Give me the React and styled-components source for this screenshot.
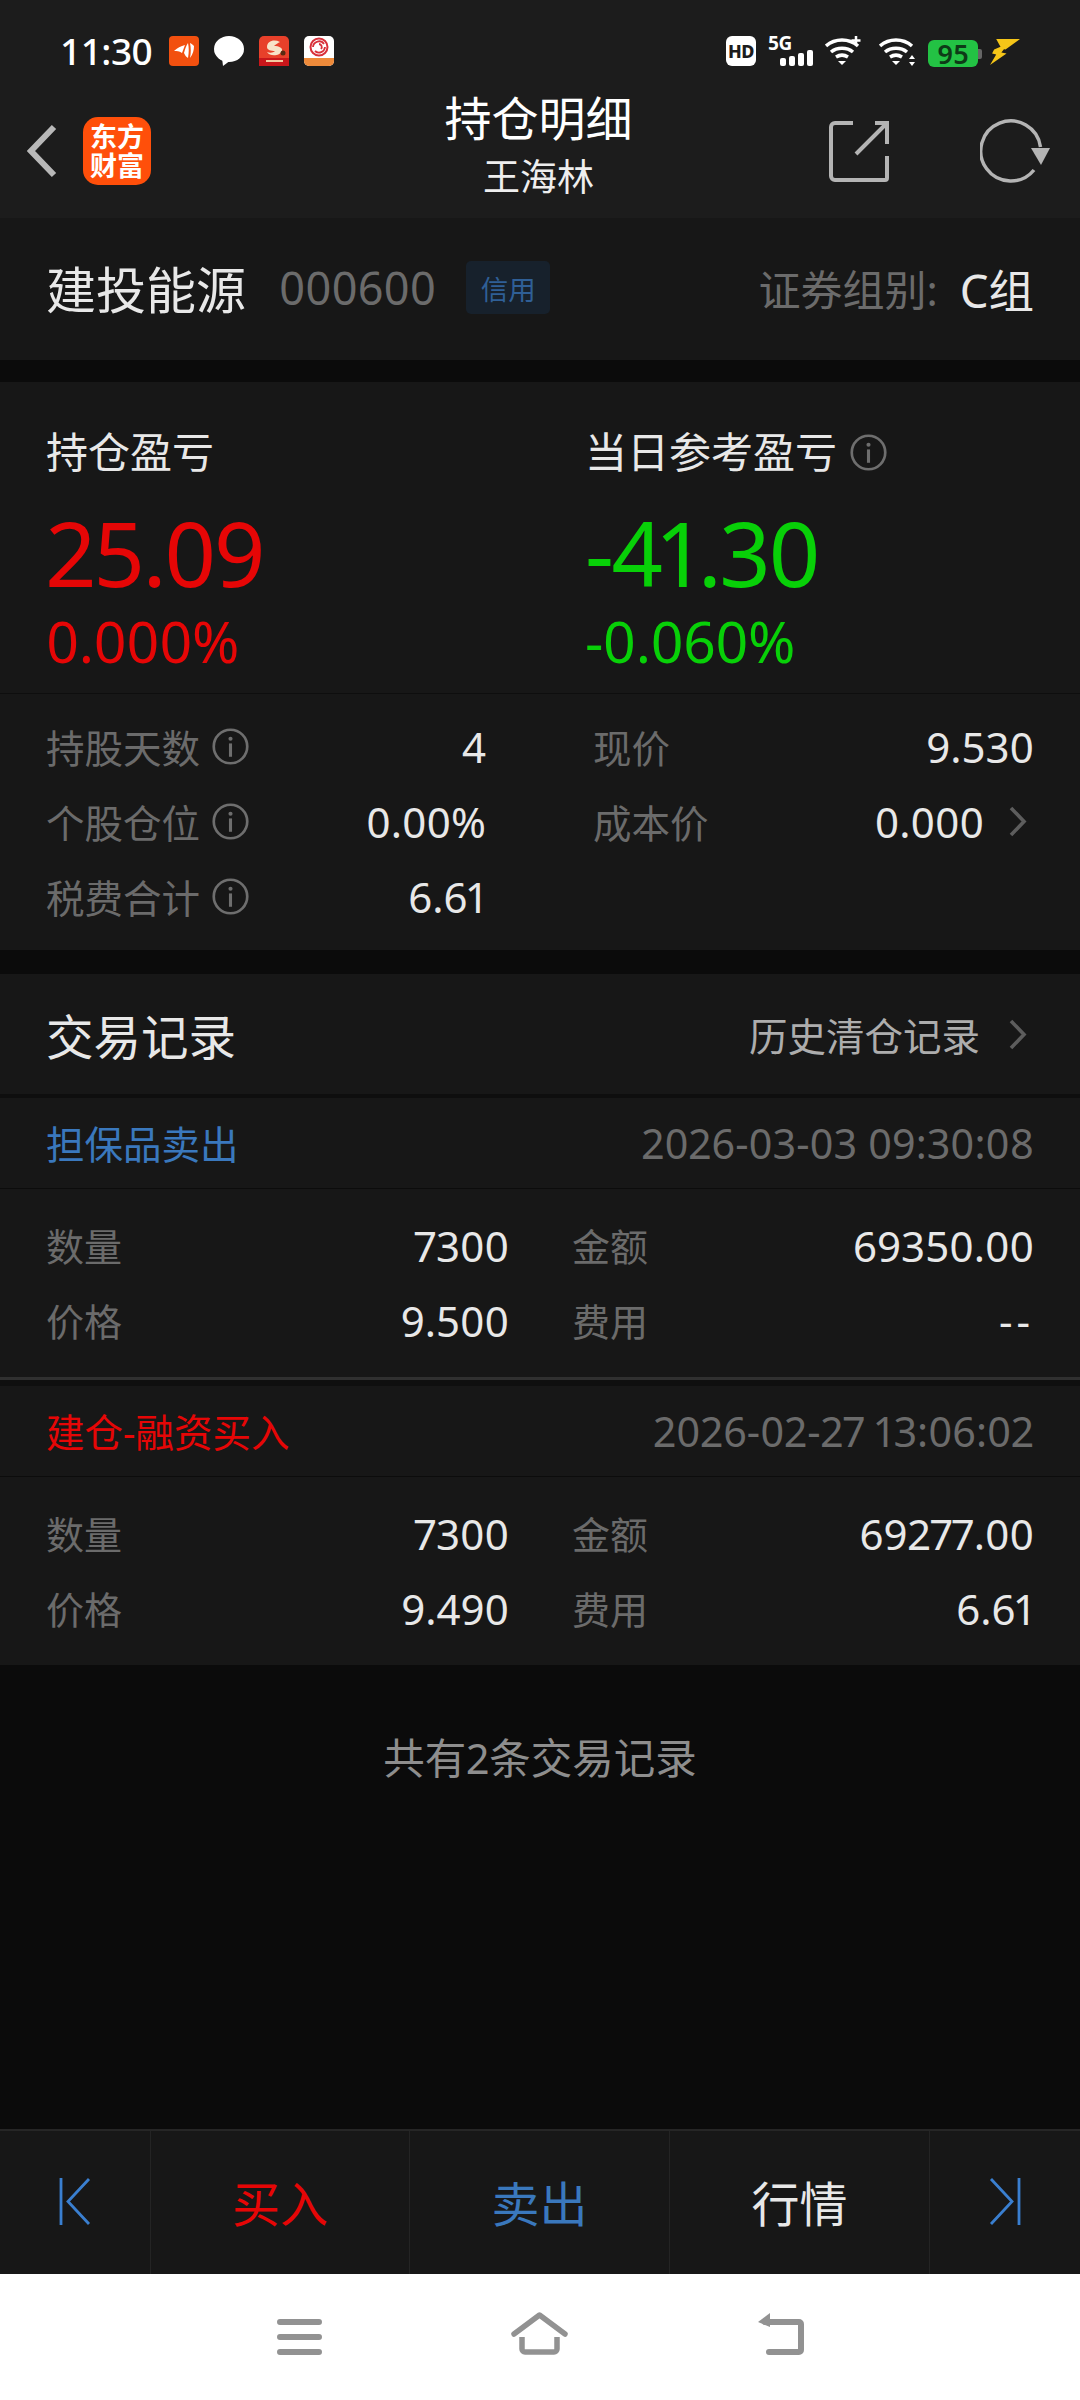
import React from 'react'
import styled, { createGlobalStyle } from 'styled-components'

const colors = {
  nav: '#1c1c1c',
  panel: '#171717',
  gap: '#0b0b0b',
  label: '#6b6b6b',
  value: '#e8e8e8',
  red: '#e60606',
  green: '#08d008',
  blue: '#3a78bd',
}

const GlobalStyle = createGlobalStyle`
  html, body {
    margin: 0;
    padding: 0;
    background: ${colors.gap};
  }
  * {
    box-sizing: border-box;
  }
  body {
    font-family: 'Noto Sans', 'Noto Sans CJK SC', sans-serif;
    font-variant-numeric: proportional-nums;
  }
`

const Page = styled.div`
  width: 1080px;
  height: 2400px;
  display: flex;
  flex-direction: column;
  background: ${colors.gap};
  overflow: hidden;
`

const TopArea = styled.header`
  height: 218px;
  background: ${colors.nav};
  display: flex;
  flex-direction: column;
`

const StatusBar = styled.div`
  height: 102px;
  padding: 36px 60px 0 60px;
  display: flex;
  align-items: flex-start;
  justify-content: space-between;
`

const StatusGroup = styled.div`
  display: flex;
  align-items: center;
  height: 30px;
  gap: ${p => p.$gap || 15}px;
`

const Clock = styled.span`
  font-size: 37px;
  line-height: 30px;
  font-weight: 500;
  font-variant-numeric: tabular-nums;
  color: #fff;
  margin-right: 2px;
  letter-spacing: -0.5px;
`

const NavBar = styled.div`
  flex: 1;
  display: grid;
  grid-template-columns: 1fr auto 1fr;
  align-items: center;
  padding: 0 30px 0 27px;
  margin-top: -18px;
`

const NavLeft = styled.div`
  display: flex;
  align-items: center;
  gap: 26px;
`

const NavRight = styled.div`
  display: flex;
  align-items: center;
  justify-content: flex-end;
  gap: 91px;
`

const AppLogo = styled.div`
  width: 68px;
  height: 68px;
  border-radius: 15px;
  background: #ff4f0a;
  color: #fff;
  font-size: 27px;
  line-height: 29px;
  font-weight: 700;
  text-align: center;
  padding-top: 5px;
`

const TitleBlock = styled.div`
  align-self: start;
  margin-top: 4px;
  text-align: center;
  color: #fff;
`

const Title = styled.div`
  font-size: 47px;
  line-height: 60px;
`

const SubTitle = styled.div`
  font-size: 37px;
  line-height: 50px;
  margin-top: 4px;
  color: #eee;
`

const StockRow = styled.section`
  height: 142px;
  background: ${colors.panel};
  padding: 0 46px 3px;
  display: flex;
  align-items: center;
`

const StockName = styled.span`
  font-size: 50px;
  color: ${colors.value};
  margin-right: 33px;
`

const StockCode = styled.span`
  font-size: 45px;
  color: ${colors.label};
  margin-right: 30px;
`

const CreditTag = styled.span`
  width: 84px;
  height: 53px;
  border-radius: 5px;
  background: #17212c;
  color: #2f5f96;
  font-size: 27.5px;
  display: flex;
  align-items: center;
  justify-content: center;
`

const GroupLabel = styled.span`
  margin-left: auto;
  font-size: 42px;
  color: ${colors.label};
`

const GroupValue = styled.span`
  font-size: 45.5px;
  color: ${colors.value};
  margin-left: 22px;
`

const Panel = styled.section`
  margin-top: ${p => p.$top || 0}px;
  background: ${colors.panel};
`

const ProfitGrid = styled.div`
  height: 312px;
  padding: 38px 46px 0;
  display: grid;
  grid-template-columns: 539px 1fr;
  border-bottom: 1px solid #0e0e0e;
`

const ProfitCol = styled.div`
  display: flex;
  flex-direction: column;
`

const ProfitLabel = styled.div`
  display: flex;
  align-items: center;
  gap: 13px;
  font-size: 42px;
  line-height: 64px;
  color: ${colors.value};
`

const ProfitValue = styled.div`
  font-size: 90px;
  line-height: 106px;
  margin-top: 15px;
  letter-spacing: -2.5px;
  color: ${p => p.$color};
`

const ProfitPercent = styled.div`
  font-size: 57px;
  line-height: 70px;
  margin-top: 1px;
  letter-spacing: -0.5px;
  color: ${p => p.$color};
`

const StatGrid = styled.div`
  height: 256px;
  padding: 15px 46px 0;
  display: grid;
  grid-template-columns: 440px 441px;
  column-gap: 107px;
  grid-auto-rows: 75px;
`

const StatCell = styled.div`
  display: flex;
  align-items: center;
`

const StatLabel = styled.span`
  font-size: 38.5px;
  color: ${colors.label};
  margin-right: 12px;
  padding-bottom: 2px;
`

const StatValue = styled.span`
  margin-left: auto;
  font-size: 42px;
  color: ${colors.value};
`

const MoreArrow = styled.span`
  display: flex;
  margin: 0 7px 0 25px;
`

const RecordHead = styled.div`
  height: 124px;
  padding: 0 53px 0 46px;
  display: flex;
  align-items: center;
  justify-content: space-between;
  border-bottom: 4px solid #0e0e0e;
`

const RecordTitle = styled.span`
  font-size: 47.5px;
  color: ${colors.value};
`

const HistoryLink = styled.span`
  display: flex;
  align-items: center;
  gap: 29px;
  font-size: 38.5px;
  color: #adadad;
`

const TradeHead = styled.div`
  height: 91px;
  padding: 0 46px;
  display: flex;
  align-items: center;
  justify-content: space-between;
  border-bottom: 1px solid #0c0c0c;
`

const TradeName = styled.span`
  font-size: 38.5px;
  padding-bottom: 3px;
  color: ${p => p.$color};
`

const TradeTime = styled.span`
  font-size: 41.3px;
  color: ${colors.label};
`

const TradeBody = styled.div`
  padding: 19px 46px 19px;
  display: grid;
  grid-template-columns: 463px 462px;
  column-gap: 63px;
  grid-auto-rows: 75px;
`

const TradeCell = styled.div`
  display: flex;
  align-items: center;
  justify-content: space-between;
`

const TradeLabel = styled.span`
  font-size: 38px;
  padding-bottom: 2px;
  color: ${colors.label};
`

const TradeValue = styled.span`
  font-size: 42px;
  letter-spacing: ${p => (p.$empty ? 4 : 0)}px;
  color: ${colors.value};
`

const TradeSeparator = styled.div`
  height: 9px;
  background: #0f0f0f;
  border-top: 3px solid #303030;
`

const Summary = styled.div`
  flex: 1;
  padding-top: 63px;
  text-align: center;
  font-size: 41.5px;
  line-height: 60px;
  color: #8e8e8e;
`

const ActionBar = styled.nav`
  height: 145px;
  background: ${colors.panel};
  border-top: 2px solid #262626;
  display: grid;
  grid-template-columns: 150px 259px 260px 260px 151px;
`

const ActionCell = styled.div`
  display: flex;
  align-items: center;
  justify-content: center;
  font-size: 48px;
  padding-bottom: 3px;
  color: ${p => p.$color};
  & + & {
    border-left: 1px solid #242424;
  }
`

const SystemNav = styled.nav`
  height: 126px;
  background: #fff;
  display: flex;
  align-items: flex-end;
  justify-content: center;
  gap: 189px;
  padding-bottom: 45px;
`

const TagSvg = styled.svg`
  display: block;
  flex: none;
`

const FlipSvg = styled(TagSvg)`
  transform: ${p => (p.$flip ? 'scaleX(-1)' : 'none')};
`

const HdBadge = styled.span`
  width: 30px;
  height: 30px;
  border-radius: 6px;
  background: #fff;
  color: #1c1c1c;
  font-size: 18px;
  font-weight: 800;
  letter-spacing: -0.5px;
  display: flex;
  align-items: center;
  justify-content: center;
`

const SignalBox = styled.div`
  position: relative;
  width: 45px;
  height: 30px;
`

const SignalText = styled.span`
  position: absolute;
  left: 0;
  top: -3px;
  font-size: 19px;
  line-height: 20px;
  font-weight: 700;
  letter-spacing: -0.5px;
  color: #fff;
`

const SignalBars = styled.div`
  position: absolute;
  right: 0;
  bottom: 0;
  display: flex;
  align-items: flex-end;
  gap: 3px;
`

const SignalBar = styled.i`
  display: block;
  width: 6px;
  height: ${p => p.$h}px;
  border-radius: 2px;
  background: #fff;
`

const Battery = styled.div`
  position: relative;
  width: 50px;
  height: 27px;
  margin-top: 4px;
  border-radius: 6px;
  background: #23c244;
  color: #0e3a17;
  font-size: 27px;
  line-height: 27px;
  font-weight: 600;
  text-align: center;
  &::after {
    content: '';
    position: absolute;
    right: -4px;
    top: 9px;
    width: 4px;
    height: 10px;
    border-radius: 0 2px 2px 0;
    background: #666;
  }
`

const Flame = () => (
  <TagSvg width="30" height="30" viewBox="0 0 30 30">
    <rect width="30" height="30" rx="4" fill="#f2500f" />
    <path d="M5 15c3-3 7-5 11-6-1 3-2 5-3 8-3-2-5-2-8-2zM15 17c1-4 2-7 4-10 1 5 1 9 0 15-2-1-3-3-4-5zM21 7c2 1 3 2 4 3 0 4-1 8-4 12 1-5 1-10 0-15z" fill="#fff" />
  </TagSvg>
)

const ChatBubble = () => (
  <TagSvg width="30" height="30" viewBox="0 0 30 30">
    <ellipse cx="15" cy="13" rx="15" ry="13" fill="#fff" />
    <path d="M8 22l1 8 8-6z" fill="#fff" />
  </TagSvg>
)

const RedApp = () => (
  <TagSvg width="30" height="30" viewBox="0 0 30 30">
    <rect width="30" height="30" rx="5" fill="#e8402a" />
    <rect y="22" width="30" height="8" fill="#c9161a" />
    <path d="M21 6c-6-3-13-1-13 5 0 3 4 4 8 4-2 2-5 2-8 1 3 5 13 4 15-1 1-3-3-5-8-5 2-2 4-3 6-4z" fill="#f7e3c8" />
    <circle cx="24" cy="17" r="2.500" fill="#5a2a12" />
    <rect x="7" y="24" width="17" height="2" fill="#f3c9a0" />
  </TagSvg>
)

const PhoenixApp = () => (
  <TagSvg width="30" height="30" viewBox="0 0 30 30">
    <rect width="30" height="30" rx="5" fill="#fff" />
    <path d="M0 22h30v3a5 5 0 0 1-5 5H5a5 5 0 0 1-5-5z" fill="#ee8a3a" />
    <circle cx="15" cy="11" r="8.500" fill="none" stroke="#d8303a" strokeWidth="2" />
    <path d="M9 11a6 6 0 0 1 11-3M21 11a6 6 0 0 1-10 4M15 8a3 3 0 0 1 2 5" fill="none" stroke="#d8303a" strokeWidth="1.800" />
  </TagSvg>
)

const WifiArcs = () => (
  <>
    <path d="M1 10C10 2 24 2 33 10" fill="none" stroke="#fff" strokeWidth="3.500" />
    <path d="M6 16c6-5 16-5 22 0" fill="none" stroke="#fff" strokeWidth="3.500" />
    <path d="M11 21c4-2.500 8-2.500 12 0" fill="none" stroke="#fff" strokeWidth="3.500" />
    <path d="M13 25h8l-4 4z" fill="#fff" />
  </>
)

const WifiPlus = () => (
  <TagSvg width="42" height="30" viewBox="0 0 42 30">
    <WifiArcs />
    <path d="M31 0v9M26.500 4.500h9" stroke="#fff" strokeWidth="2.500" />
  </TagSvg>
)

const WifiPlain = () => (
  <TagSvg width="37" height="30" viewBox="0 0 37 30">
    <WifiArcs />
    <path d="M33 19l3 4h-6zM33 30l3-4h-6z" fill="#fff" />
  </TagSvg>
)

const Bolt = () => (
  <TagSvg width="30" height="27" viewBox="0 0 29 26">
    <path d="M6 1h23L15 11l-4-1zM4 11l14-6-7 9 5 1L0 26l6-10-4-1z" fill="#f5c518" />
  </TagSvg>
)

const BackIcon = () => (
  <TagSvg width="30" height="54" viewBox="0 0 30 54">
    <path d="M27 3L4 27l23 24" fill="none" stroke="#b8b8b8" strokeWidth="6" />
  </TagSvg>
)

const ShareIcon = () => (
  <TagSvg width="60" height="61" viewBox="0 0 60 61">
    <path d="M24 2H6a4 4 0 0 0-4 4v49a4 4 0 0 0 4 4h50a2 2 0 0 0 2-2V35" fill="none" stroke="#b4b4b4" strokeWidth="4" />
    <path d="M27 33L57 3M46 2h12v21" fill="none" stroke="#b4b4b4" strokeWidth="4" />
  </TagSvg>
)

const RefreshIcon = () => (
  <TagSvg width="70" height="64" viewBox="0 0 70 64">
    <path d="M54 51A30 30 0 1 1 60.500 28" fill="none" stroke="#b4b4b4" strokeWidth="3.500" />
    <path d="M51 29h19l-9 17z" fill="#b4b4b4" />
  </TagSvg>
)

const InfoIcon = () => (
  <TagSvg width="37" height="37" viewBox="0 0 36 36">
    <circle cx="18" cy="18" r="16.300" fill="none" stroke="#6e6e6e" strokeWidth="2.600" />
    <circle cx="18" cy="10.500" r="2" fill="#6e6e6e" />
    <path d="M18 15v13" stroke="#6e6e6e" strokeWidth="3" />
  </TagSvg>
)

const Chevron = () => (
  <TagSvg width="18" height="31" viewBox="0 0 18 31">
    <path d="M2 2l13 13.500L2 29" fill="none" stroke="#5d5d5d" strokeWidth="3.600" />
  </TagSvg>
)

const JumpIcon = ({ flip }) => (
  <FlipSvg $flip={flip} width="32" height="47" viewBox="0 0 32 47">
    <path d="M2 0v47M30 1L9 23.500 30 46" fill="none" stroke="#3a7fd0" strokeWidth="2.800" />
  </FlipSvg>
)

const MenuKey = () => (
  <TagSvg width="45" height="36" viewBox="0 0 45 36">
    <path d="M3 3h39M3 18h39M3 33h39" stroke="#929292" strokeWidth="6" strokeLinecap="round" />
  </TagSvg>
)

const HomeKey = () => (
  <TagSvg width="57" height="43" viewBox="0 0 57 43">
    <path d="M3 22L28.500 3 54 22" fill="none" stroke="#929292" strokeWidth="5.500" strokeLinecap="round" strokeLinejoin="round" />
    <path d="M11 25v12a3 3 0 0 0 3 3h29a3 3 0 0 0 3-3V25" fill="none" stroke="#929292" strokeWidth="5.500" />
  </TagSvg>
)

const ReturnKey = () => (
  <TagSvg width="47" height="42" viewBox="0 0 47 42">
    <path d="M8 9h34a2 2 0 0 1 2 2v26a2 2 0 0 1-2 2H12" fill="none" stroke="#929292" strokeWidth="6" strokeLinecap="round" />
    <path d="M1 9L13 0v14z" fill="#929292" />
  </TagSvg>
)

const stats = [
  { label: '持股天数', info: true, value: '4' },
  { label: '现价', value: '9.530' },
  { label: '个股仓位', info: true, value: '0.00%' },
  { label: '成本价', value: '0.000', more: true },
  { label: '税费合计', info: true, value: '6.61' },
]

const trades = [
  {
    name: '担保品卖出',
    color: colors.blue,
    time: '2026-03-03 09:30:08',
    cells: [
      ['数量', '7300'],
      ['金额', '69350.00'],
      ['价格', '9.500'],
      ['费用', '--'],
    ],
  },
  {
    name: '建仓-融资买入',
    color: colors.red,
    time: '2026-02-27 13:06:02',
    cells: [
      ['数量', '7300'],
      ['金额', '69277.00'],
      ['价格', '9.490'],
      ['费用', '6.61'],
    ],
  },
]

const App = () => (
  <Page>
    <GlobalStyle />
    <TopArea>
      <StatusBar>
        <StatusGroup>
          <Clock>11:30</Clock>
          <Flame />
          <ChatBubble />
          <RedApp />
          <PhoenixApp />
        </StatusGroup>
        <StatusGroup $gap={12}>
          <HdBadge>HD</HdBadge>
          <SignalBox>
            <SignalText>5G</SignalText>
            <SignalBars>
              <SignalBar $h={8} />
              <SignalBar $h={10} />
              <SignalBar $h={13} />
              <SignalBar $h={16} />
            </SignalBars>
          </SignalBox>
          <WifiPlus />
          <WifiPlain />
          <Battery>95</Battery>
          <Bolt />
        </StatusGroup>
      </StatusBar>
      <NavBar>
        <NavLeft>
          <BackIcon />
          <AppLogo>
            东方
            <br />
            财富
          </AppLogo>
        </NavLeft>
        <TitleBlock>
          <Title>持仓明细</Title>
          <SubTitle>王海林</SubTitle>
        </TitleBlock>
        <NavRight>
          <ShareIcon />
          <RefreshIcon />
        </NavRight>
      </NavBar>
    </TopArea>

    <StockRow>
      <StockName>建投能源</StockName>
      <StockCode>000600</StockCode>
      <CreditTag>信用</CreditTag>
      <GroupLabel>证券组别:</GroupLabel>
      <GroupValue>C组</GroupValue>
    </StockRow>

    <Panel $top={22}>
      <ProfitGrid>
        <ProfitCol>
          <ProfitLabel>持仓盈亏</ProfitLabel>
          <ProfitValue $color={colors.red}>25.09</ProfitValue>
          <ProfitPercent $color={colors.red}>0.000%</ProfitPercent>
        </ProfitCol>
        <ProfitCol>
          <ProfitLabel>
            当日参考盈亏
            <InfoIcon />
          </ProfitLabel>
          <ProfitValue $color={colors.green}>-41.30</ProfitValue>
          <ProfitPercent $color={colors.green}>-0.060%</ProfitPercent>
        </ProfitCol>
      </ProfitGrid>
      <StatGrid>
        {stats.map(s => (
          <StatCell key={s.label}>
            <StatLabel>{s.label}</StatLabel>
            {s.info && <InfoIcon />}
            <StatValue>{s.value}</StatValue>
            {s.more && (
              <MoreArrow>
                <Chevron />
              </MoreArrow>
            )}
          </StatCell>
        ))}
      </StatGrid>
    </Panel>

    <Panel $top={24}>
      <RecordHead>
        <RecordTitle>交易记录</RecordTitle>
        <HistoryLink>
          历史清仓记录
          <Chevron />
        </HistoryLink>
      </RecordHead>
      {trades.map((t, i) => (
        <article key={t.time}>
          {i > 0 && <TradeSeparator />}
          <TradeHead>
            <TradeName $color={t.color}>{t.name}</TradeName>
            <TradeTime>{t.time}</TradeTime>
          </TradeHead>
          <TradeBody>
            {t.cells.map(([label, value]) => (
              <TradeCell key={label}>
                <TradeLabel>{label}</TradeLabel>
                <TradeValue $empty={value === '--'}>{value}</TradeValue>
              </TradeCell>
            ))}
          </TradeBody>
        </article>
      ))}
    </Panel>

    <Summary>共有2条交易记录</Summary>

    <ActionBar>
      <ActionCell>
        <JumpIcon />
      </ActionCell>
      <ActionCell $color={colors.red}>买入</ActionCell>
      <ActionCell $color={colors.blue}>卖出</ActionCell>
      <ActionCell $color={colors.value}>行情</ActionCell>
      <ActionCell>
        <JumpIcon flip />
      </ActionCell>
    </ActionBar>

    <SystemNav>
      <MenuKey />
      <HomeKey />
      <ReturnKey />
    </SystemNav>
  </Page>
)

export default App
